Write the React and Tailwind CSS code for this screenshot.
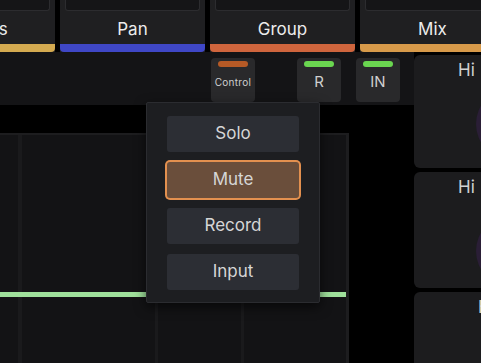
const tabs = [
  { label: "Sends", bar: "bg-[#d4aa50]", extra: "-ml-[90px]" },
  { label: "Pan", bar: "bg-[#3f47c6]", extra: "" },
  { label: "Group", bar: "bg-[#cf653d]", extra: "" },
  { label: "Mix", bar: "bg-[#d79a4a]", extra: "" },
];

const menu = ["Solo", "Mute", "Record", "Input"];

function Tab({ label, bar, extra }) {
  return (
    <div className={`flex h-[52px] w-[145px] shrink-0 flex-col bg-[#1f1f21] ${extra}`}>
      <div className="mx-[5px] h-[11px] rounded-b-[3px] border border-t-0 border-[#2c2c2f] bg-[#151517]" />
      <div className="flex flex-1 items-center justify-center pt-[3px] text-[17px] leading-none text-[#ececec]">
        {label}
      </div>
      <div className={`h-[8px] rounded-b-[4px] ${bar}`} />
    </div>
  );
}

function ToggleButton({ label, pill, small }) {
  return (
    <div className="flex h-[44px] w-[44px] flex-col items-center rounded-[4px] bg-[#29292b] pt-[3px]">
      <div className={`h-[6px] w-[30px] rounded-full ${pill}`} />
      <div
        className={`flex flex-1 items-center pb-[3px] text-[#cfcfcf] ${
          small ? "text-[10px] tracking-[0.3px]" : "text-[15px]"
        }`}
      >
        {label}
      </div>
    </div>
  );
}

function Card({ label, pad, circleTop, h }) {
  return (
    <div className={`flex shrink-0 flex-col overflow-hidden rounded-l-[6px] bg-[#1c1c1e] ${h}`}>
      <div className={`pt-[4px] text-[17px] leading-[22px] text-[#d2d2d2] ${pad}`}>{label}</div>
      <div className={`ml-[62px] h-[72px] w-[72px] shrink-0 rounded-full bg-[#2a1e36] ${circleTop}`} />
    </div>
  );
}

export default function App() {
  return (
    <div
      className="relative h-[363px] w-[481px] overflow-hidden bg-black"
      style={{ fontFamily: "Inter, 'Liberation Sans', sans-serif" }}
    >
      <div className="flex gap-[5px]">
        {tabs.map((t) => (
          <Tab key={t.label} {...t} />
        ))}
      </div>

      <div className="flex">
        <div className="flex w-[414px] shrink-0 flex-col">
          <div className="flex h-[53px] items-center bg-[#141416] pl-[211px] pt-[2px]">
            <ToggleButton label="Control" pill="bg-[#b65a26]" small />
            <div className="ml-[42px]">
              <ToggleButton label="R" pill="bg-[#6ad650]" />
            </div>
            <div className="ml-[15px]">
              <ToggleButton label="IN" pill="bg-[#6ad650]" />
            </div>
          </div>
          <div className="h-[28px] bg-black" />
          <div className="flex">
            <div className="relative flex h-[230px] w-[349px] border-t-2 border-r-[3px] border-[#1d1d1f] bg-[#131315]">
              <div className="w-[22px] border-r-4 border-[#1a1a1c]" />
              <div className="w-[136px] border-r-[3px] border-[#1a1a1c]" />
              <div className="w-[86px] border-r-[3px] border-[#1a1a1c]" />
              <div className="flex-1" />
              <div className="absolute left-0 right-0 top-[157px] h-[5px] bg-[#9fe09b]" />
            </div>
          </div>
        </div>

        <div className="flex flex-1 flex-col gap-[4px] pt-[3px]">
          <Card label="Hi" pad="pl-[44px]" circleTop="mt-[7px]" h="h-[113px]" />
          <Card label="Hi" pad="pl-[44px]" circleTop="mt-[17px]" h="h-[116px]" />
          <Card label="Hi" pad="pl-[64px]" circleTop="mt-[32px]" h="h-[80px]" />
        </div>
      </div>

      <div className="absolute left-[146px] top-[102px] flex h-[201px] w-[174px] flex-col gap-[10px] rounded-[2px] border border-[#2b2c30] bg-[#1d1e21] px-[20px] pt-[13px] shadow-[0_4px_12px_rgba(0,0,0,0.6)]">
        {menu.map((m) => (
          <div
            key={m}
            className={`flex h-[36px] items-center justify-center rounded-[3px] text-[17px] text-[#d6d6d6] ${
              m === "Mute"
                ? "bg-[#6a4e3b] ring-2 ring-[#e3904f]"
                : "bg-[#2c2e34]"
            }`}
          >
            {m}
          </div>
        ))}
      </div>
    </div>
  );
}
